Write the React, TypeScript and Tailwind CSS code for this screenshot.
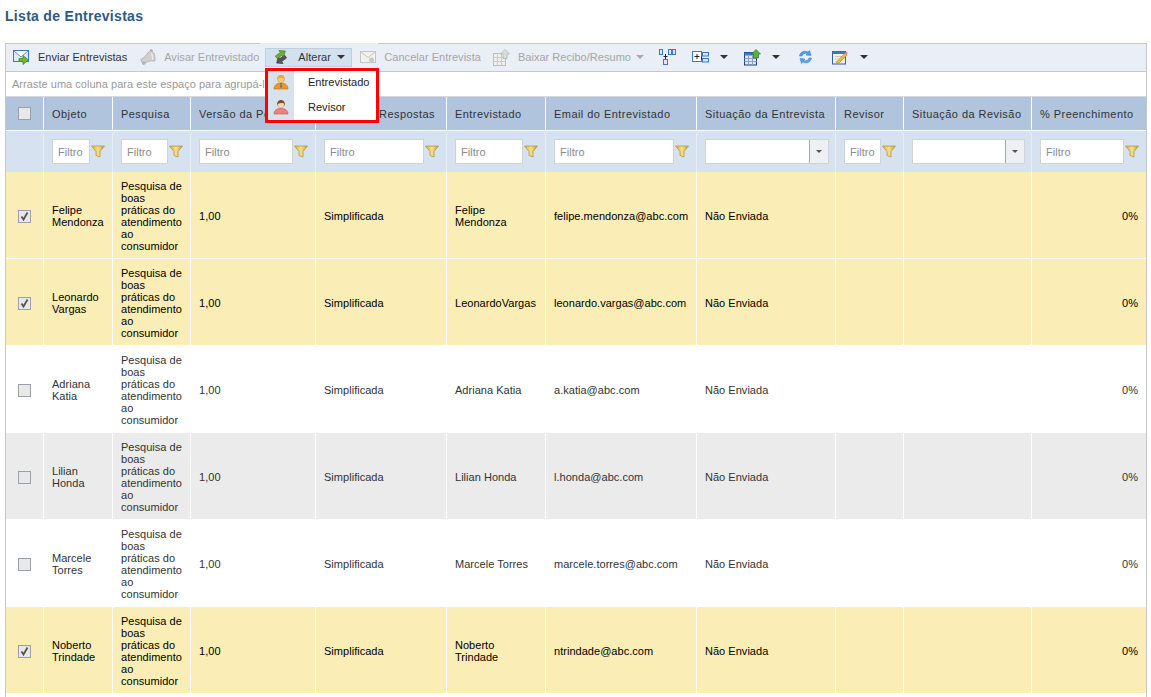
import React from "react";

const Funnel = () => (
  <svg width="14" height="13" viewBox="0 0 14 13" className="shrink-0">
    <defs>
      <linearGradient id="fg" x1="0" x2="1" y1="0" y2="0">
        <stop offset="0" stopColor="#d8a93a" />
        <stop offset="0.5" stopColor="#f6e08a" />
        <stop offset="1" stopColor="#c89a35" />
      </linearGradient>
    </defs>
    <path d="M0.5 1h13l-4.500 5.500v5.500l-4-1.500v-4z" fill="url(#fg)" stroke="#b89a4a" strokeWidth="0.8" />
  </svg>
);

const MailSend = () => (
  <svg width="17" height="16" viewBox="0 0 17 16">
    <rect x="0.5" y="1.5" width="15" height="11" fill="#dfeafa" stroke="#3f77c4" />
    <path d="M1 2l7 6 7-6" fill="#fff" stroke="#3f77c4" strokeWidth="0.8" />
    <path d="M6 9.5h4V6.5l5.5 4.5L10 15.5V12.5H6z" fill="#76b530" stroke="#3d7a18" strokeWidth="0.7" />
  </svg>
);
const Bell = () => (
  <svg width="16" height="17" viewBox="0 0 16 17">
    <path d="M0.800 10.500C4.500 9.500 6 5 9 3c2-1.300 5-.5 5.500 2.500.5 3 .5 5 .5 6.500-4.500-.8-9.500 1-12 3.500z" fill="#cfcfcf" stroke="#adadad" strokeWidth="0.8" />
    <path d="M10 1.500c.8-.8 2-.5 2.500.5" fill="none" stroke="#999" strokeWidth="1.200" />
    <path d="M11 4.500c1.500 1.500 2 4 1.500 6.500" fill="none" stroke="#ececec" strokeWidth="1.200" />
    <circle cx="4" cy="14" r="1.800" fill="#b5b5b5" />
  </svg>
);
const Swap = () => (
  <svg width="16" height="16" viewBox="0 0 16 16">
    <g transform="rotate(-35 8 8)">
      <path d="M12 8.500H6V6L1 10.500l5 4v-2.500h6z" fill="#555555" stroke="#333333" strokeWidth="0.6" />
      <path d="M4 4h6V1.500l5 4-5 4V7H4z" fill="#72ad34" stroke="#3f7a1e" strokeWidth="0.6" />
    </g>
  </svg>
);
const MailOff = () => (
  <svg width="16" height="14" viewBox="0 0 16 14">
    <rect x="0.5" y="1.500" width="15" height="11" fill="#f1f1f1" stroke="#c4c4c4" />
    <path d="M1 2l7 5.500 7-5.500" fill="none" stroke="#c4c4c4" />
    <circle cx="11.500" cy="10" r="2.500" fill="#c8c8c8" />
  </svg>
);
const TableOff = () => (
  <svg width="17" height="17" viewBox="0 0 17 17">
    <rect x="0.500" y="4.500" width="12" height="12" fill="#efefef" stroke="#bdbdbd" />
    <path d="M0.500 8.500h12M0.500 12.500h12M4.500 4.500v12M8.500 4.500v12" stroke="#cdcdcd" />
    <path d="M12 0.500l4.500 4.500H14v4.500h-4V5H7.500z" fill="#dcdcdc" stroke="#b0b0b0" strokeWidth="0.7" />
  </svg>
);
const Org = () => (
  <svg width="17" height="16" viewBox="0 0 17 16">
    <g fill="#dcebfb" stroke="#3f77d0">
      <rect x="0.500" y="0.500" width="3" height="5" />
      <rect x="9.500" y="0.500" width="3" height="5" />
      <rect x="13.500" y="0.500" width="3" height="5" />
      <rect x="4.500" y="10.500" width="4" height="5" />
    </g>
    <path d="M6.500 5v5M4.500 7.500h4" stroke="#222" />
  </svg>
);
const Group = () => (
  <svg width="17" height="13" viewBox="0 0 17 13">
    <rect x="0.500" y="0.500" width="9" height="10" fill="#fff" stroke="#3f77d0" />
    <path d="M2.500 5.500h5M5 3v5" stroke="#222" />
    <path d="M9.500 5.500v3" stroke="#222" />
    <rect x="10.500" y="1.500" width="6" height="3.500" fill="#dcebfb" stroke="#3f77d0" />
    <rect x="10.500" y="7.500" width="6" height="3.500" fill="#dcebfb" stroke="#3f77d0" />
  </svg>
);
const TableUp = () => (
  <svg width="17" height="17" viewBox="0 0 17 17">
    <rect x="0.500" y="3.500" width="12" height="12.500" fill="#dfe8f2" stroke="#1f3f7a" />
    <rect x="0.500" y="3.500" width="12" height="3" fill="#3f77c4" />
    <path d="M0.500 9.500h12M0.500 12.500h12M4.500 6.500v9M8.500 6.500v9" stroke="#8aa2bd" />
    <path d="M12 0.500l4.500 4.500H14.500v4h-5V5H7.500z" fill="#5fae3a" stroke="#2f7a1e" strokeWidth="0.7" />
  </svg>
);
const Refresh = () => (
  <svg width="15" height="16" viewBox="0 0 15 16">
    <path d="M1.500 7C2 3 6 1 10 3l1.500-1.500L13 6.500 8 6l1.500-1.500C7 3.500 4.500 5 4 7z" fill="#4f9be8" stroke="#2f78c8" strokeWidth="0.5" />
    <path d="M13.500 9c-.5 4-4.500 6-8.500 4l-1.500 1.500L2 9.500 7 10l-1.500 1.500C8 12.500 10.500 11 11 9z" fill="#5aa5ee" stroke="#2f78c8" strokeWidth="0.5" />
  </svg>
);
const EditTable = () => (
  <svg width="16" height="15" viewBox="0 0 16 15">
    <rect x="0.500" y="1.500" width="13" height="12.500" fill="#f3f4ea" stroke="#2f5fb0" />
    <rect x="0.500" y="1.500" width="13" height="2.500" fill="#3f77c4" />
    <path d="M3 6.500h7M3 9h5M3 11.500h4" stroke="#c5c9c0" />
    <path d="M5 11.500L13 3l2 2-8 8-3 1z" fill="#f0b93a" stroke="#b8842a" strokeWidth="0.6" />
    <path d="M13 3l1-1.500 1.500 1L15 5z" fill="#e8836a" />
  </svg>
);
const Man = () => (
  <svg width="16" height="16" viewBox="0 0 16 16">
    <path d="M1 15c0-3.500 2.500-6 7-6s7 2.500 7 6z" fill="#ee9a22" stroke="#b86e10" strokeWidth="0.6" />
    <circle cx="8" cy="5" r="3.600" fill="#f8cf77" stroke="#d89a30" strokeWidth="0.6" />
    <path d="M4.400 4.500C4.500 2 6 1 8 1s3.500 1 3.600 3.500C9.500 4 6.500 4 4.400 4.500z" fill="#f0a92e" />
    <path d="M7.400 9h1.200l.4 4-1 1-1-1z" fill="#4a78b8" />
  </svg>
);
const Woman = () => (
  <svg width="16" height="16" viewBox="0 0 16 16">
    <path d="M1 15c0-3.500 2.500-5.500 7-5.500s7 2 7 5.500z" fill="#f27f7f" stroke="#c65050" strokeWidth="0.6" />
    <circle cx="8" cy="5.500" r="3.400" fill="#fbd3b5" stroke="#cf9a80" strokeWidth="0.5" />
    <path d="M4 7C3.800 3 5.500 1 8 1s4.200 2 4 6c-.5-2-1.500-3-2.500-3.200C8 4.300 6 4.500 5 4.800 4.500 5.300 4.200 6 4 7z" fill="#7a4a2a" />
  </svg>
);
const Caret = ({ light }: { light?: boolean }) => (
  <span
    className={
      light
        ? "inline-block w-0 h-0 border-x-[4px] border-x-transparent border-t-[4px] border-t-[#aaaaaa]"
        : "inline-block w-0 h-0 border-x-[4px] border-x-transparent border-t-[4px] border-t-[#333333]"
    }
  />
);

const Checkbox = ({ checked }: { checked: boolean }) => (
  <span className="mx-auto flex h-[13px] w-[13px] items-center justify-center border border-[#9a9fb0] bg-[#e8e8e8]">
    {checked && (
      <svg width="11" height="11" viewBox="0 0 11 11">
        <path d="M2.500 5.500l2 3 4-7" fill="none" stroke="#555555" strokeWidth="1.800" />
      </svg>
    )}
  </span>
);

const widths = [38, 69, 78, 125, 131, 99, 151, 139, 68, 128, 114];
const headers = [
  "",
  "Objeto",
  "Pesquisa",
  "Versão da Pesquisa",
  "Respostas",
  "Entrevistado",
  "Email do Entrevistado",
  "Situação da Entrevista",
  "Revisor",
  "Situação da Revisão",
  "% Preenchimento",
];

type Row = { sel: boolean; obj: string; ent: string; email: string; bg: string };
const rows: Row[] = [
  { sel: true, obj: "Felipe Mendonza", ent: "Felipe Mendonza", email: "felipe.mendonza@abc.com", bg: "bg-[#faedb5]" },
  { sel: true, obj: "Leonardo Vargas", ent: "LeonardoVargas", email: "leonardo.vargas@abc.com", bg: "bg-[#faedb5]" },
  { sel: false, obj: "Adriana Katia", ent: "Adriana Katia", email: "a.katia@abc.com", bg: "bg-white" },
  { sel: false, obj: "Lilian Honda", ent: "Lilian Honda", email: "l.honda@abc.com", bg: "bg-[#ebebeb]" },
  { sel: false, obj: "Marcele Torres", ent: "Marcele Torres", email: "marcele.torres@abc.com", bg: "bg-white" },
  { sel: true, obj: "Noberto Trindade", ent: "Noberto Trindade", email: "ntrindade@abc.com", bg: "bg-[#faedb5]" },
];

const FilterInput = () => (
  <div className="mr-[1px] flex items-center gap-[1px]">
    <div className="h-[25px] min-w-0 flex-1 border border-[#d3d3d3] bg-white pl-[5px] text-left text-[11px] leading-[25px] text-[#8c8c8c]">
      Filtro
    </div>
    <Funnel />
  </div>
);
const FilterSelect = () => (
  <div className="flex h-[25px] items-stretch border border-[#d3d3d3] bg-white">
    <div className="flex-1 border-r border-[#a8a8a8]" />
    <div className="flex w-[18px] items-center justify-center bg-[#eef1f4]">
      <span className="inline-block h-0 w-0 border-x-[3px] border-t-[3px] border-x-transparent border-t-[#555555]" />
    </div>
  </div>
);

const ToolItem = ({ icon, label, off, caret, cls }: { icon: React.ReactNode; label?: string; off?: boolean; caret?: boolean; cls?: string }) => (
  <div className={"flex h-[19px] items-center " + (cls ?? "")}>
    <span className="flex w-[17px] items-center justify-center">{icon}</span>
    {label && <span className={off ? "ml-[8px] text-[#a6a6a6]" : "ml-[8px] text-[#333333]"}>{label}</span>}
    {caret && (
      <span className={label ? "ml-[5px] flex" : "ml-[11px] flex"}>
        <Caret light={off} />
      </span>
    )}
  </div>
);

export default function App() {
  return (
    <div className="min-h-[697px] w-[1151px] overflow-hidden bg-white font-['Liberation_Sans',Arial,sans-serif] text-[11px] leading-[12px] tracking-[0.03px] text-[#333333]">
      <h1 className="h-[43px] pl-[5px] pt-[8px] text-[14px] font-bold leading-[16px] tracking-[0.3px] text-[#2c5a85]">
        Lista de Entrevistas
      </h1>
      <div className="relative ml-[5px] w-[1142px] border-x border-t border-[#c8c8c8]">
        <div className="flex h-[28px] items-center border-b border-[#c8c8c8] bg-[#e9eef7] pb-[1px] pl-[7px]">
          <ToolItem icon={<MailSend />} label="Enviar Entrevistas" />
          <ToolItem icon={<Bell />} label="Avisar Entrevistado" off cls="ml-[12px]" />
          <div className="ml-[6px] flex h-[19px] w-[87px] items-center border border-[#bcd0e4] bg-[#d3e1ef] pl-[7px]">
            <Swap />
            <span className="ml-[9px]">Alterar</span>
            <span className="ml-[6px] flex">
              <Caret />
            </span>
          </div>
          <ToolItem icon={<MailOff />} off label="Cancelar Entrevista" cls="ml-[7px]" />
          <ToolItem icon={<TableOff />} off label="Baixar Recibo/Resumo" caret cls="ml-[12px]" />
          <ToolItem icon={<Org />} cls="ml-[15px]" />
          <ToolItem icon={<Group />} caret cls="ml-[16px]" />
          <ToolItem icon={<TableUp />} caret cls="ml-[16px]" />
          <ToolItem icon={<Refresh />} cls="ml-[17px]" />
          <ToolItem icon={<EditTable />} caret cls="ml-[18px]" />
        </div>
        <div className="flex h-[25px] items-center border-b border-[#d8d8d8] bg-white pl-[6px] text-[#9a9a9a]">
          Arraste uma coluna para este espaço para agrupá-la
        </div>

        <table className="w-[1140px] table-fixed border-separate border-spacing-0">
          <colgroup>
            {widths.map((w, i) => (
              <col key={i} style={{ width: w }} />
            ))}
          </colgroup>
          <thead>
            <tr className="h-[34px] bg-[#b0c4de]">
              {headers.map((h, i) => (
                <th
                  key={i}
                  className={
                    "border-b border-r border-white text-left text-[11px] font-normal tracking-[0.45px] text-[#333333] last:border-r-0 " +
                    (i === 0 ? "" : i === 4 ? "pl-[63px]" : "pl-[8px]")
                  }
                >
                  {i === 0 ? <Checkbox checked={false} /> : <span className="block whitespace-nowrap overflow-hidden">{h}</span>}
                </th>
              ))}
            </tr>
            <tr className="h-[41px] bg-[#d6e2ef]">
              {headers.map((h, i) => (
                <th key={i} className="border-r border-[#e6edf5] pl-[8px] pr-[6px] font-normal last:border-r-0 first:p-0">
                  {i === 0 ? null : i === 7 || i === 9 ? <FilterSelect /> : <FilterInput />}
                </th>
              ))}
            </tr>
          </thead>
          <tbody>
            {rows.map((r) => {
              const tc = r.sel ? "text-black" : "text-[#333333]";
              const cell = "border-b border-r border-white pl-[8px] pr-[6px] pt-[2px] align-middle " + tc;
              return (
                <tr key={r.email} className={"h-[87px] " + r.bg}>
                  <td className={cell + " !pl-0 !pr-0"}>
                    <Checkbox checked={r.sel} />
                  </td>
                  <td className={cell}>{r.obj}</td>
                  <td className={cell}>Pesquisa de boas práticas do atendimento ao consumidor</td>
                  <td className={cell}>1,00</td>
                  <td className={cell}>Simplificada</td>
                  <td className={cell + " !pr-[8px]"}>{r.ent}</td>
                  <td className={cell + " !pr-0 whitespace-nowrap"}>{r.email}</td>
                  <td className={cell}>Não Enviada</td>
                  <td className={cell} />
                  <td className={cell} />
                  <td className={cell + " border-r-0 !pr-[8px] text-right"}>0%</td>
                </tr>
              );
            })}
          </tbody>
        </table>
        <div className="h-[3px]" />

        <div className="absolute left-[254px] top-[-1px] h-[1px] w-[118px] bg-[#ececec]" />
        <div className="absolute left-[259px] top-[24px] z-10 h-[55px] w-[114px] border-[3px] border-[#ff0000] bg-white">
          <div className="flex h-full">
            <div className="flex w-[26px] flex-col items-center gap-[9px] bg-[#d6e3ef] pt-[3px]">
              <Man />
              <Woman />
            </div>
            <div className="flex flex-col gap-[13px] pl-[14px] pt-[5px] text-[#222222]">
              <span>Entrevistado</span>
              <span>Revisor</span>
            </div>
          </div>
        </div>
      </div>
    </div>
  );
}
